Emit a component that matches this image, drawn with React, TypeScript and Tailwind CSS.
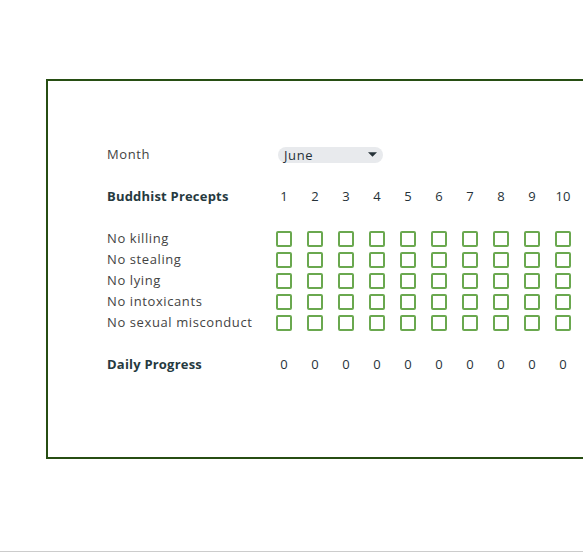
import React, { useState } from "react";

const PRECEPTS = [
  "No killing",
  "No stealing",
  "No lying",
  "No intoxicants",
  "No sexual misconduct",
];

const DAYS = [1, 2, 3, 4, 5, 6, 7, 8, 9, 10];

function Box({ checked, onToggle }: { checked: boolean; onToggle: () => void }) {
  return (
    <button
      type="button"
      onClick={onToggle}
      className="w-4 h-4 border-2 border-[#6aa84f] rounded-[2px] bg-white flex items-center justify-center p-0"
    >
      {checked && (
        <svg viewBox="0 0 12 12" className="w-3 h-3">
          <path d="M2 6.5 L5 9 L10 3" fill="none" stroke="#6aa84f" strokeWidth="2" />
        </svg>
      )}
    </button>
  );
}

export default function App() {
  const [marks, setMarks] = useState<boolean[][]>(
    PRECEPTS.map(() => DAYS.map(() => false))
  );

  const toggle = (r: number, c: number) =>
    setMarks((m) => m.map((row, i) => (i === r ? row.map((v, j) => (j === c ? !v : v)) : row)));

  const totals = DAYS.map((_, c) => marks.reduce((s, row) => s + (row[c] ? 1 : 0), 0));

  return (
    <div
      className="h-[552px] w-[583px] overflow-hidden bg-white border-b border-[#cccccc]"
      style={{ fontFamily: '"Open Sans", "Noto Sans", sans-serif' }}
    >
      <div className="ml-[46px] mt-[79px] w-[620px] h-[380px] border-2 border-[#274e13] pl-[59px] pt-[63px] text-[13px] text-[#434343]">
        <div className="flex h-[21px] items-center">
          <div className="w-[161px] tracking-[0.6px]">Month</div>
          <div className="ml-[10px] w-[105px] h-4 rounded-full bg-[#e8eaed] flex items-center pl-[6px] pr-[6px] text-[#263238]">
            <span className="flex-1 leading-4 tracking-[0.6px]">June</span>
            <svg viewBox="0 0 10 5" className="w-[9px] h-[5px]">
              <path d="M0 0 H10 L5 5 Z" fill="#263238" />
            </svg>
          </div>
        </div>

        <div className="flex h-[21px] items-center mt-[21px]">
          <div className="w-[161px] font-bold tracking-[0.2px] text-[#263a3f]">Buddhist Precepts</div>
          {DAYS.map((d) => (
            <div key={d} className="w-[31px] pl-px text-center text-[#263238]">
              {d}
            </div>
          ))}
        </div>

        <div className="mt-[21px]">
          {PRECEPTS.map((p, r) => (
            <div key={p} className="flex h-[21px] items-center">
              <div className="w-[161px] tracking-[0.6px]">{p}</div>
              {DAYS.map((d, c) => (
                <div key={d} className="w-[31px] flex justify-center">
                  <Box checked={marks[r][c]} onToggle={() => toggle(r, c)} />
                </div>
              ))}
            </div>
          ))}
        </div>

        <div className="flex h-[21px] items-center mt-[21px]">
          <div className="w-[161px] font-bold tracking-[0.2px] text-[#263a3f]">Daily Progress</div>
          {totals.map((t, i) => (
            <div key={i} className="w-[31px] pl-px text-center text-[#263238]">
              {t}
            </div>
          ))}
        </div>
      </div>
    </div>
  );
}
